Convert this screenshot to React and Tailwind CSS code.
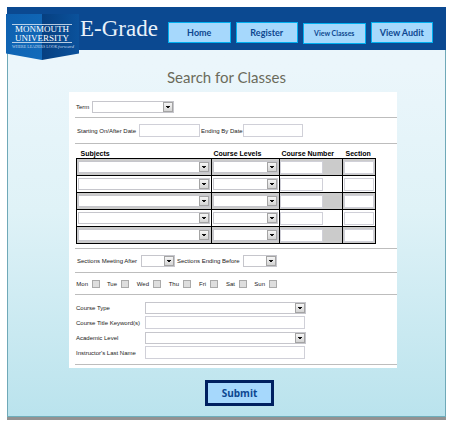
import React from "react";

const line = "h-px bg-[#bdbdbd]";
const field = "min-w-0 border border-[#d0d0d8] bg-white px-0.5 text-[6px] outline-none";

function Dropdown({ id, label, className }) {
  return (
    <div className={"flex h-[12px] border border-[#c6c6cc] bg-white " + className}>
      <select id={id} aria-label={label} className="min-w-0 flex-1 appearance-none bg-white text-[6px] outline-none">
        <option></option>
      </select>
      <span className="pointer-events-none flex w-[10px] shrink-0 items-center justify-center border border-[#a4a4a4] bg-linear-to-b from-[#f6f6f6] to-[#d4d4d4]">
        <svg width="4" height="2" viewBox="0 0 4 2" aria-hidden="true">
          <path d="M0 0h4v1H3v1H1V1H0z" fill="#111" />
        </svg>
      </span>
    </div>
  );
}

function Logo() {
  return (
    <svg className="-ml-px mt-[7px] h-[46px] w-[73px] shrink-0" viewBox="0 0 73 46" role="img" aria-label="Monmouth University">
      <defs>
        <linearGradient id="left" x1="0" y1="0" x2="1" y2="1">
          <stop offset="0" stopColor="#0d5fae" />
          <stop offset="1" stopColor="#126bbb" />
        </linearGradient>
        <linearGradient id="right" x1="0" y1="0" x2="1" y2="0">
          <stop offset="0" stopColor="#063f80" />
          <stop offset="1" stopColor="#0b529c" />
        </linearGradient>
      </defs>
      <path d="M0 0H36V46L0 39.500z" fill="url(#left)" />
      <path d="M36 0H73V39.500L36 46z" fill="url(#right)" />
      <path d="M6 10.500H66M6 28.500H66" stroke="#e4edf6" strokeWidth="0.800" />
      <g fill="#fff" fontFamily="'Liberation Serif', serif" textAnchor="middle">
        <text x="36" y="18" fontSize="9">MONMOUTH</text>
        <text x="36" y="27" fontSize="9">UNIVERSITY</text>
      </g>
      <g fill="#c5d9ec" fontFamily="'Liberation Serif', serif">
        <text x="6" y="34" fontSize="4">WHERE LEADERS LOOK</text>
        <text x="52" y="34" fontSize="5" fontStyle="italic">forward</text>
      </g>
    </svg>
  );
}

const navBase =
  "h-[21px] min-w-0 flex-1 whitespace-nowrap border border-[#00b0f0] bg-[#a6d8fc] font-bold text-[#0d4790] leading-none";

const rows = [1, 2, 3, 4, 5];
const days = [
  ["Mon", "w-[31px]"],
  ["Tue", "w-[29px]"],
  ["Wed", "w-[32px]"],
  ["Thu", "w-[30px]"],
  ["Fri", "w-[27px]"],
  ["Sat", "w-[29px]"],
  ["Sun", "w-[30px]"],
];

export default function App() {
  return (
    <div className="bg-white pt-[7px] pr-[6px] pb-[7px] pl-[7px] font-['Liberation_Sans',Arial,sans-serif] text-[6px] leading-[8px] text-[#222]">
      <div className="border-b-[3px] border-[#929292]">
        <div className="border-b border-[#6faebb] bg-linear-to-b from-[#ebf6fb] from-15% via-[#dff2f7] via-50% to-[#bae3ed]">
          <header className="flex h-[43px] items-start bg-[#0b4991] pr-[13px] font-['Lato',Carlito,sans-serif]">
            <Logo />
            <div className="mt-[7px] ml-px w-[88px] shrink-0 whitespace-nowrap font-['Liberation_Serif',serif] text-[23px] leading-[30px] text-[#e8f1fa]">
              E-Grade
            </div>
            <nav className="mt-[15px] flex min-w-0 flex-1 gap-[5px]">
              <button className={navBase + " text-[9px]"}>Home</button>
              <button className={navBase + " text-[9px]"}>Register</button>
              <button className={navBase + " mt-px text-[7px]"}>View Classes</button>
              <button className={navBase + " text-[9px]"}>View Audit</button>
            </nav>
          </header>

          <main className="border-x border-[#6fa9b8] pb-[10px]">
            <h1 className="pt-[17px] text-center font-['Lato',Carlito,sans-serif] text-[15px] leading-[20px] text-[#6b6b5b]">
              Search for Classes
            </h1>
            <form onSubmit={(e) => e.preventDefault()}>
              <div className="mt-[5px] mr-[48px] ml-[61px] bg-white pb-[3px] pl-[6px]">
                <div className="flex h-[25px] items-center pt-[4px]">
                  <label htmlFor="term" className="w-[17px] pl-px">Term</label>
                  <Dropdown id="term" className="w-[82px]" />
                </div>
                <div className={line} />
                <div className="flex h-[25px] items-center pl-[2px] whitespace-nowrap">
                  <label htmlFor="start" className="w-[62px]">Starting On/After Date</label>
                  <input id="start" className={field + " h-[13px] w-[61px]"} />
                  <label htmlFor="end" className="w-[43px] pl-px">Ending By Date</label>
                  <input id="end" className={field + " h-[13px] w-[60px]"} />
                </div>
                <div className={line} />
                <table className="mt-[5px] ml-px w-[299px] table-fixed border-collapse">
                  <colgroup>
                    <col className="w-[135px]" />
                    <col className="w-[68px]" />
                    <col className="w-[63px]" />
                    <col className="w-[33px]" />
                  </colgroup>
                  <thead>
                    <tr className="h-[9px] text-left text-[7px] leading-[9px] whitespace-nowrap text-black">
                      <th className="py-0 pl-[4px]">Subjects</th>
                      <th className="py-0 pl-[2px]">Course Levels</th>
                      <th className="py-0 pl-[2px]">Course Number</th>
                      <th className="py-0 pl-[3px]">Section</th>
                    </tr>
                  </thead>
                  <tbody>
                    {rows.map((n) => (
                      <tr key={n} className="h-[17px] odd:bg-[#cbcbcb]">
                        <td className="border border-black px-px py-0">
                          <Dropdown label={"Subject " + n} className="w-full" />
                        </td>
                        <td className="border border-black px-px py-0">
                          <Dropdown label={"Course level " + n} className="w-full" />
                        </td>
                        <td className="border border-black p-0">
                          <input aria-label={"Course number " + n} className={field + " block h-[13px] w-[43px]"} />
                        </td>
                        <td className="border border-black px-px py-0">
                          <input aria-label={"Section " + n} className={field + " block h-[13px] w-[30px]"} />
                        </td>
                      </tr>
                    ))}
                  </tbody>
                </table>
                <div className={line + " mt-[4px]"} />
                <div className="flex h-[23px] items-center pl-[2px] whitespace-nowrap">
                  <label htmlFor="after" className="w-[64px]">Sections Meeting After</label>
                  <Dropdown id="after" className="w-[34px]" />
                  <label htmlFor="before" className="w-[68px] pl-[2px]">Sections Ending Before</label>
                  <Dropdown id="before" className="w-[34px]" />
                </div>
                <div className={line} />
                <div className="flex h-[21px] items-center pl-[2px]">
                  {days.map(([day, w]) => (
                    <label key={day} className={"flex items-center justify-end gap-[4px] pr-[8px] " + w}>
                      {day}
                      <input
                        type="checkbox"
                        className="size-[8px] shrink-0 appearance-none border border-[#aaa] bg-[#dedede] checked:bg-[#555]"
                      />
                    </label>
                  ))}
                </div>
                <div className={line} />
                <div className="grid grid-cols-[69px_161px] items-center gap-x-px pt-[5px] pb-[4px] whitespace-nowrap">
                  <label htmlFor="type" className="pl-px">Course Type</label>
                  <div className="flex h-[15px] items-center">
                    <Dropdown id="type" className="w-full" />
                  </div>
                  <label htmlFor="title" className="pl-px">Course Title Keyword(s)</label>
                  <div className="flex h-[15px] items-center">
                    <input id="title" className={field + " h-[13px] w-[160px]"} />
                  </div>
                  <label htmlFor="level" className="pl-px">Academic Level</label>
                  <div className="flex h-[15px] items-center">
                    <Dropdown id="level" className="w-full" />
                  </div>
                  <label htmlFor="last" className="pl-px">Instructor's Last Name</label>
                  <div className="flex h-[15px] items-center">
                    <input id="last" className={field + " h-[13px] w-[160px]"} />
                  </div>
                </div>
                <div className={line} />
              </div>
              <div className="mt-[12px] flex justify-center pl-[26px]">
                <button
                  type="submit"
                  className="h-[26px] w-[69px] border-[3px] border-[#002060] bg-[#a6d8fc] font-['Open_Sans','Noto_Sans',sans-serif] text-[10px] leading-none font-bold text-[#0d4790]"
                >
                  Submit
                </button>
              </div>
            </form>
          </main>
        </div>
      </div>
    </div>
  );
}
